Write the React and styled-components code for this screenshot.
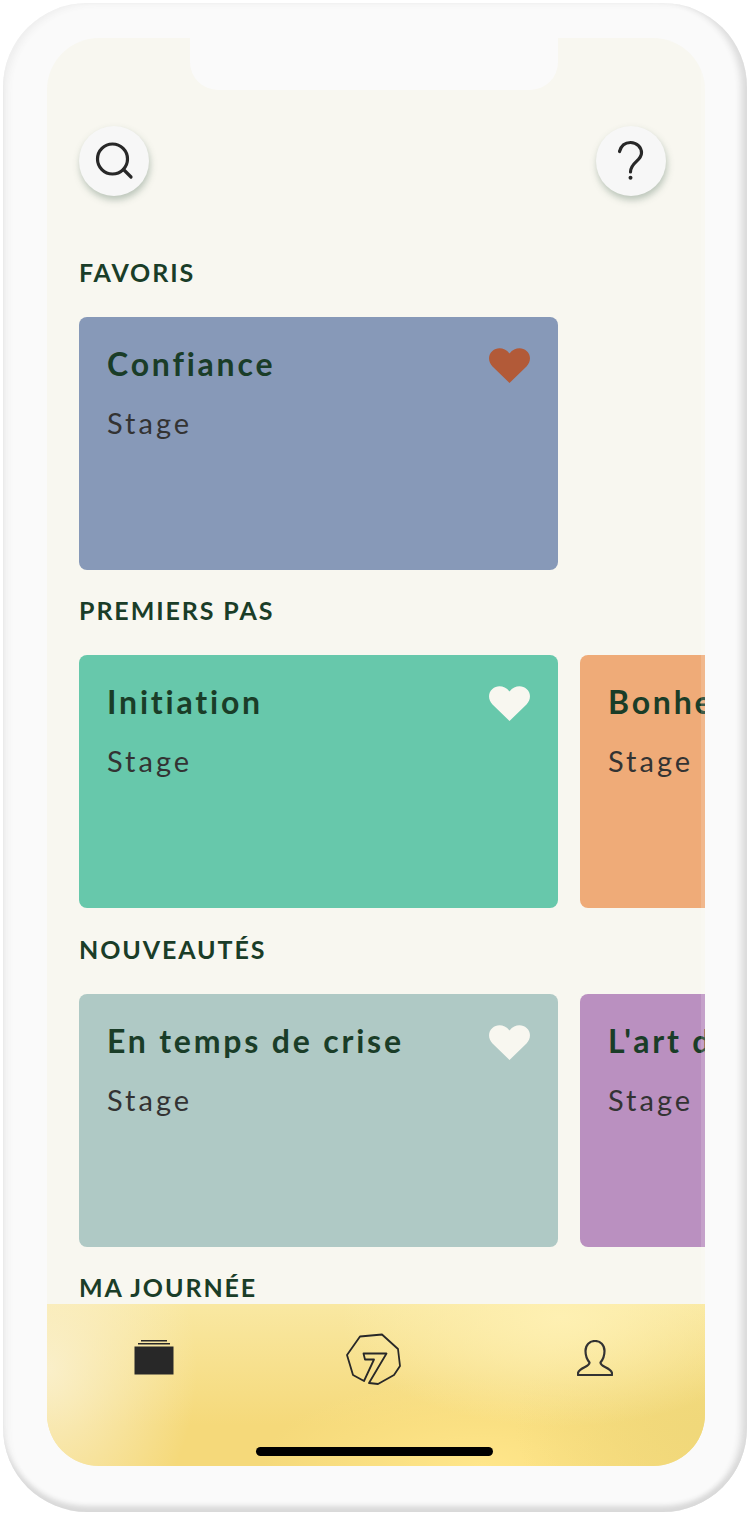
import React from "react";
import styled, { createGlobalStyle } from "styled-components";

const GlobalStyle = createGlobalStyle`
  html, body {
    margin: 0;
    padding: 0;
    background: #fff;
  }
  body {
    font-family: "Lato", "Liberation Sans", sans-serif;
  }
`;

const sections = [
  {
    title: "FAVORIS",
    cards: [{ name: "Confiance", color: "#8799b8", heart: "#b25a38" }],
  },
  {
    title: "PREMIERS PAS",
    cards: [
      { name: "Initiation", color: "#67c8ab", heart: "#f8f7f0" },
      { name: "Bonheur", color: "#efab78", heart: "#f8f7f0" },
    ],
  },
  {
    title: "NOUVEAUTÉS",
    cards: [
      { name: "En temps de crise", color: "#afc9c5", heart: "#f8f7f0" },
      { name: "L'art de vivre", color: "#ba90c0", heart: "#f8f7f0" },
    ],
  },
];

const Heart = ({ color }) => (
  <HeartIcon viewBox="0 0 41 35" fill={color}>
    <path d="M20.5 35 L3.5 18.5 C-1.2 13.8 -1 6.6 3.4 2.9 C8 -1 15.6 -0.6 20.5 5.4 C25.4 -0.6 33 -1 37.6 2.9 C42 6.6 42.2 13.8 37.5 18.5 Z" />
  </HeartIcon>
);

const App = () => {
  return (
    <>
      <GlobalStyle />
      <Phone>
        <Screen>
          <Notch />
          <Main>
            <Header>
              <RoundButton aria-label="Rechercher">
                <svg width="40" height="40" viewBox="0 0 40 40" fill="none" stroke="#282828" strokeWidth="3.2">
                  <circle cx="18.5" cy="18" r="15" />
                  <path d="M29.5 28.5 L37 36" strokeLinecap="round" />
                </svg>
              </RoundButton>
              <RoundButton aria-label="Aide">
                <svg width="40" height="44" viewBox="0 0 40 44" fill="none" stroke="#282828" strokeWidth="3.2">
                  <path d="M8.5 12.5 C10 7 14 3.500 19.500 3.500 C26 3.500 30.500 8.500 30.500 14 C30.500 22 19.500 23 19.500 33" strokeLinecap="round" />
                  <circle cx="19.500" cy="38.700" r="2" fill="#282828" stroke="none" />
                </svg>
              </RoundButton>
            </Header>
            {sections.map((section) => (
              <section key={section.title}>
                <SectionTitle>{section.title}</SectionTitle>
                <CardRow>
                  {section.cards.map((card) => (
                    <Card key={card.name} $color={card.color}>
                      <CardTop>
                        <CardTitle>{card.name}</CardTitle>
                        <Heart color={card.heart} />
                      </CardTop>
                      <CardKind>Stage</CardKind>
                    </Card>
                  ))}
                </CardRow>
              </section>
            ))}
            <SectionTitle>MA JOURNÉE</SectionTitle>
            <EdgeFade />
          </Main>
          <TabBar>
            <Tabs>
              <Tab>
                <svg width="40" height="36" viewBox="0 0 40 36" fill="#282828">
                  <rect x="7" y="0" width="26" height="1.5" />
                  <rect x="4" y="3" width="32" height="1.5" />
                  <rect x="0.5" y="6.5" width="39" height="28" />
                </svg>
              </Tab>
              <Tab>
                <svg width="90" height="75" viewBox="0 0 90 75" fill="none" stroke="#282828" strokeWidth="1.8" strokeLinejoin="round">
                  <path d="M35 60 L24 54 L18 34 L31 15.5 L53 13.5 L69 28 L71 45 L65 54 L49 63 L40 62 L57.5 32.5 L34.5 32.5 L36 38.5 L45 38.5 Z" />
                </svg>
              </Tab>
              <Tab>
                <svg width="36" height="36" viewBox="0 0 36 36" fill="none" stroke="#333" strokeWidth="2.2" strokeLinejoin="round">
                  <path d="M18 1 C12.500 1 8.500 5 8.500 11 C8.500 16 10 19.500 12.500 22.500 C12.500 24.500 11 25.500 8 27 C4.500 28.700 1.500 30.500 1 33 L1 35 L35 35 L35 33 C34.500 30.500 31.500 28.700 28 27 C25 25.500 23.500 24.500 23.500 22.500 C26 19.500 27.500 16 27.500 11 C27.500 5 23.500 1 18 1 Z" />
                </svg>
              </Tab>
            </Tabs>
            <HomeIndicator />
          </TabBar>
        </Screen>
      </Phone>
    </>
  );
};
export default App;

const Phone = styled.div`
  box-sizing: border-box;
  width: 744px;
  height: 1509px;
  margin: 3px 1px 3px 3px;
  padding: 35px 42px 46px 44px;
  border-radius: 84px;
  background: #fafafa;
  box-shadow:
    inset 0 -8px 5px -2px #d9d9d9,
    inset -10px 0 6px -4px #dcdcdc,
    inset 7px 3px 7px -3px #eeeeee;
`;

const Screen = styled.div`
  position: relative;
  height: 1428px;
  display: flex;
  flex-direction: column;
  overflow: hidden;
  border-radius: 52px;
  background: #f8f7f0;
`;

const Notch = styled.div`
  position: absolute;
  top: 0;
  left: 143px;
  width: 368px;
  height: 52px;
  border-radius: 0 0 28px 28px;
  background: #fafafa;
  z-index: 2;
`;

const Main = styled.main`
  position: relative;
  flex: 1;
  min-height: 0;
  overflow: hidden;
  padding-top: 88px;
`;

const EdgeFade = styled.div`
  position: absolute;
  top: 0;
  right: 0;
  bottom: 0;
  width: 4px;
  background: rgba(255, 255, 255, 0.16);
`;

const Header = styled.header`
  display: flex;
  justify-content: space-between;
  padding: 0 39px 0 32px;
  margin-bottom: 61px;
`;

const RoundButton = styled.button`
  width: 70px;
  height: 70px;
  padding: 0;
  display: flex;
  align-items: center;
  justify-content: center;
  border: none;
  border-radius: 50%;
  background: #f7f7f7;
  box-shadow: 1px 4px 7px rgba(70, 100, 80, 0.35);
`;

const SectionTitle = styled.h2`
  margin: 0 0 30px 32px;
  font-size: 25px;
  line-height: 30px;
  font-weight: 700;
  letter-spacing: 1.9px;
  color: #1a3d28;
`;

const CardRow = styled.div`
  display: flex;
  gap: 22px;
  padding-left: 32px;
  margin-bottom: 25.4px;
  overflow: hidden;
`;

const Card = styled.article`
  box-sizing: border-box;
  flex: none;
  width: 479px;
  height: 253px;
  padding: 28px 28px 0;
  border-radius: 8px;
  background: ${(p) => p.$color};
`;

const CardTop = styled.div`
  display: flex;
  justify-content: space-between;
  align-items: flex-start;
`;

const CardTitle = styled.h3`
  margin: 0;
  font-size: 32px;
  line-height: 38px;
  font-weight: 700;
  letter-spacing: 2.8px;
  color: #1a3d28;
  white-space: nowrap;
`;

const HeartIcon = styled.svg`
  flex: none;
  width: 41px;
  height: 35px;
  margin-top: 3px;
`;

const CardKind = styled.p`
  margin: 23px 0 0;
  font-size: 29px;
  line-height: 34px;
  font-weight: 400;
  letter-spacing: 3px;
  color: #333;
`;

const TabBar = styled.nav`
  flex: none;
  height: 162px;
  display: flex;
  flex-direction: column;
  background:
    radial-gradient(ellipse 150px 190px at 0% 40%, rgba(250, 240, 205, 0.95), rgba(250, 240, 205, 0) 100%),
    radial-gradient(ellipse 220px 110px at 78% 8%, rgba(254, 240, 178, 1), rgba(254, 240, 178, 0) 100%),
    radial-gradient(ellipse 190px 130px at 100% 75%, rgba(240, 216, 122, 1), rgba(240, 216, 122, 0) 100%),
    radial-gradient(ellipse 220px 90px at 66% 100%, rgba(255, 230, 138, 1), rgba(255, 230, 138, 0) 100%),
    linear-gradient(180deg, #f9e8a2 0%, #f5d97a 75%);
`;

const Tabs = styled.div`
  display: flex;
  justify-content: space-between;
  align-items: center;
  height: 108px;
  padding: 0 65.5px 0 61.5px;
  box-sizing: border-box;
`;

const Tab = styled.div`
  display: flex;
  justify-content: center;
  align-items: center;
  width: 90px;
  height: 75px;
`;

const HomeIndicator = styled.div`
  width: 237px;
  height: 9px;
  margin: 35px 0 0 209px;
  border-radius: 5px;
  background: #000;
`;
